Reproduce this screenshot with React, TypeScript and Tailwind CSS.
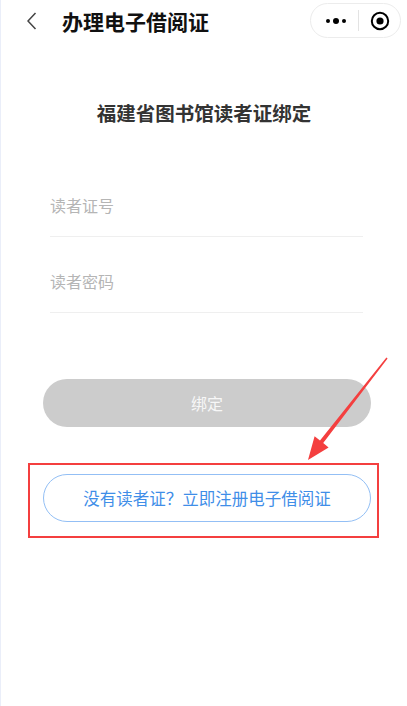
import React from "react";

// Annotation arrow pointing at the register button
const Arrow: React.FC = () => (
  <svg
    className="absolute left-0 top-0 pointer-events-none"
    width="407"
    height="706"
    viewBox="0 0 407 706"
  >
    <polygon
      points="386.6,358.4 322.2,442.9 327.6,447.4 307,460 313.6,436.2 319,440.5 385.4,357.6"
      fill="#f43f3f"
    />
  </svg>
);

const Capsule: React.FC = () => (
  <div className="mr-[6px] flex h-[35px] w-[91px] items-center rounded-full border border-[#ececec] bg-white">
    <div className="flex w-[47px] items-center justify-center gap-[3px] pl-[2px]">
      <span className="h-[4px] w-[4px] rounded-full bg-black" />
      <span className="h-[6px] w-[6px] rounded-full bg-black" />
      <span className="h-[4px] w-[4px] rounded-full bg-black" />
    </div>
    <span className="h-[21px] w-px bg-[#e3e3e3]" />
    <div className="flex flex-1 items-center justify-center">
      <svg width="20" height="20" viewBox="0 0 20 20">
        <circle cx="10" cy="10" r="8.2" fill="none" stroke="#000" strokeWidth="2" />
        <circle cx="10" cy="10" r="3.6" fill="#000" />
      </svg>
    </div>
  </div>
);

const Field: React.FC<{ placeholder: string; type?: string }> = ({ placeholder, type = "text" }) => (
  <div className="flex h-[76px] items-end border-b border-[#efefef] pb-[19px]">
    <input
      type={type}
      placeholder={placeholder}
      className="h-[24px] w-full bg-transparent text-[16px] leading-[24px] text-[#333] outline-none placeholder:text-[#b5b5b5]"
    />
  </div>
);

export default function App() {
  return (
    <div
      className="relative h-[706px] w-[407px] overflow-hidden border-l border-[#eaeef9] bg-white"
      style={{ fontFamily: '"Noto Sans CJK SC", "Noto Sans", sans-serif' }}
    >
      {/* nav bar */}
      <div className="flex h-[41px] items-center justify-between">
        <div className="flex items-center">
          <svg className="ml-[26px]" width="10" height="18" viewBox="0 0 10 18">
            <polyline points="8.5,1 1,9 8.5,17" fill="none" stroke="#444" strokeWidth="1.5" />
          </svg>
          <div className="ml-[25px] text-[21px] font-semibold leading-[28px] text-[#111]">
            办理电子借阅证
          </div>
        </div>
        <Capsule />
      </div>

      <h1 className="mt-[58px] text-center text-[19.5px] font-semibold leading-[28px] text-[#333]">
        福建省图书馆读者证绑定
      </h1>

      <div className="ml-[49px] mt-[34px] w-[313px]">
        <Field placeholder="读者证号" />
        <Field placeholder="读者密码" type="password" />
      </div>

      <button className="ml-[42px] mt-[66px] flex h-[48px] w-[328px] items-center justify-center rounded-full bg-[#cccccc] text-[16px] text-[#f7f7f7]">
        绑定
      </button>

      <div className="ml-[27px] mt-[36px] w-[351px] border-2 border-[#f43f3f] pb-[14px] pl-[13px] pr-[6px] pt-[9px]">
        <button className="flex h-[48px] w-[328px] items-center justify-center rounded-full border border-[#93bff5] bg-white text-[16.5px] text-[#3f8ee8]">
          没有读者证？立即注册电子借阅证
        </button>
      </div>

      <Arrow />
    </div>
  );
}
